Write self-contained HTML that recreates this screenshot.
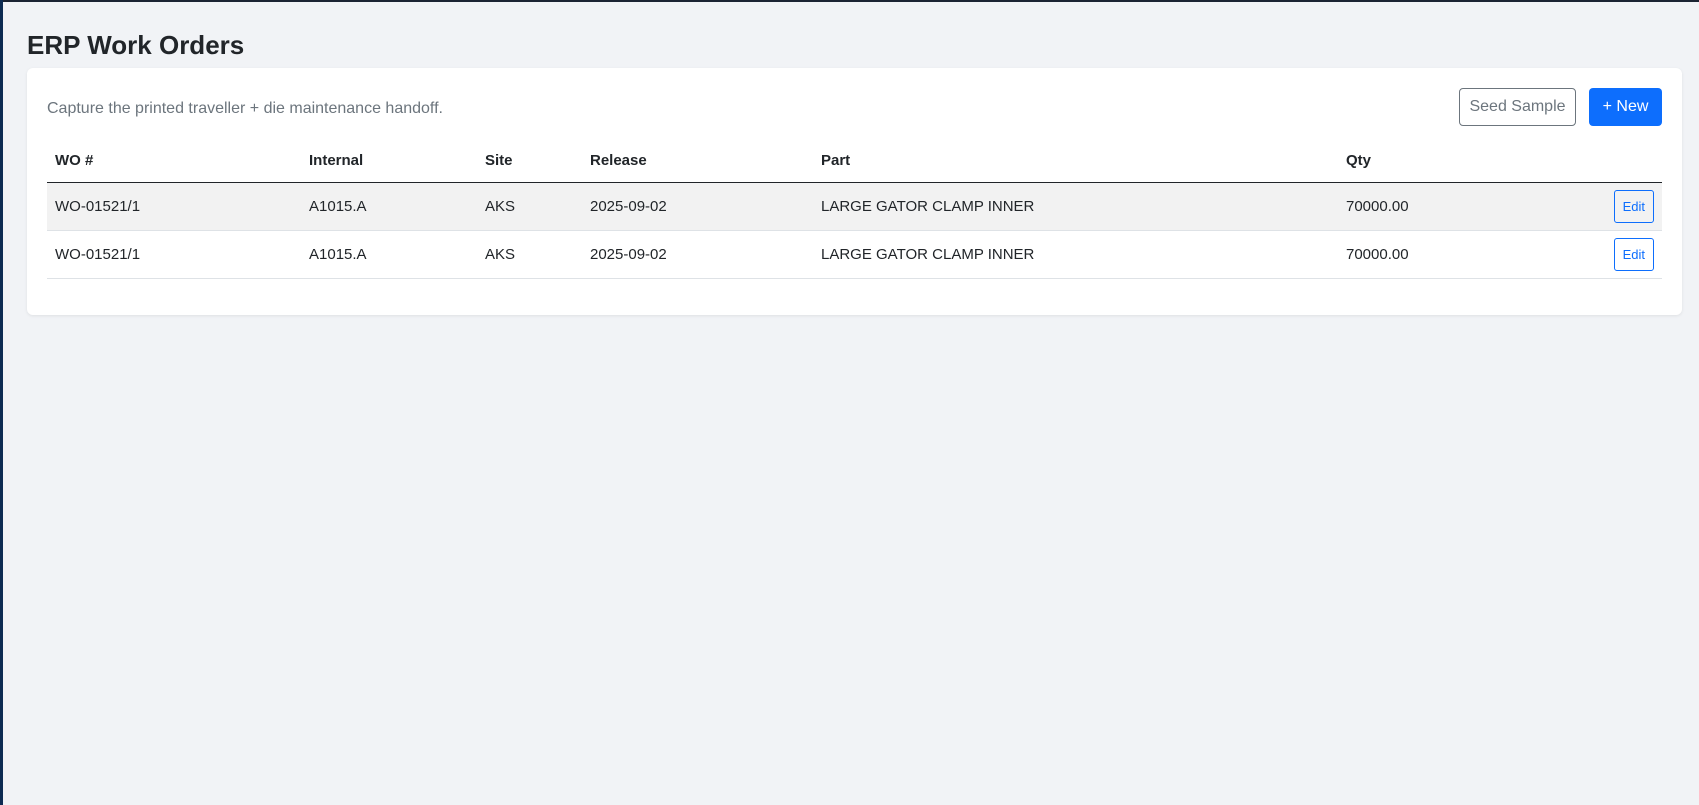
<!DOCTYPE html>
<html><head><style>
*{box-sizing:border-box;margin:0;padding:0}
body{width:1699px;height:805px;background:#f1f3f6;font-family:"Liberation Sans",sans-serif;color:#212529;position:relative;overflow:hidden}
.lb{position:absolute;left:0;top:0;width:3px;height:805px;background:#0d2b52}
.tb{position:absolute;left:0;top:0;width:1699px;height:2px;background:#1b2433}
h1{position:absolute;left:27px;top:30px;font-size:26px;font-weight:bold}
.card{position:absolute;left:27px;top:68px;width:1655px;height:247px;background:#fff;border-radius:6px;box-shadow:0 1px 3px rgba(0,0,0,.08)}
.desc{position:absolute;left:20px;top:32px;font-size:16px;color:#6c757d}
.btn{position:absolute;top:20px;height:38px;border-radius:4px;font-size:16px;display:flex;align-items:center;justify-content:center}
.seed{left:1432px;width:117px;border:1px solid #6c757d;color:#6c757d}
.new{left:1562px;width:73px;background:#0d6efd;color:#fff}
table{position:absolute;border-collapse:collapse;font-size:15px;width:1615px}
th{text-align:left;font-weight:bold;height:43px;padding:0 8px;border-bottom:1.5px solid #212529;vertical-align:middle}
td{height:48px;padding:0 8px;border-bottom:1px solid #dee2e6}
tr.s td{background:#f2f2f2}
.e{display:inline-block;border:1px solid #0d6efd;color:#0d6efd;border-radius:3px;font-size:13px;padding:8px 8px;float:right}
</style></head><body>
<div class="tb"></div><div class="lb"></div>
<h1>ERP Work Orders</h1>
<div class="card">
<div class="desc">Capture the printed traveller + die maintenance handoff.</div>
<div class="btn seed">Seed Sample</div>
<div class="btn new">+ New</div>
</div>
<table style="left:47px;top:139px">
<tr><th style="width:254px">WO #</th><th style="width:176px">Internal</th><th style="width:105px">Site</th><th style="width:231px">Release</th><th style="width:525px">Part</th><th>Qty</th><th></th></tr>
<tr class="s"><td>WO-01521/1</td><td>A1015.A</td><td>AKS</td><td>2025-09-02</td><td>LARGE GATOR CLAMP INNER</td><td>70000.00</td><td><span class="e">Edit</span></td></tr>
<tr><td>WO-01521/1</td><td>A1015.A</td><td>AKS</td><td>2025-09-02</td><td>LARGE GATOR CLAMP INNER</td><td>70000.00</td><td><span class="e">Edit</span></td></tr>
</table>
</body></html>
